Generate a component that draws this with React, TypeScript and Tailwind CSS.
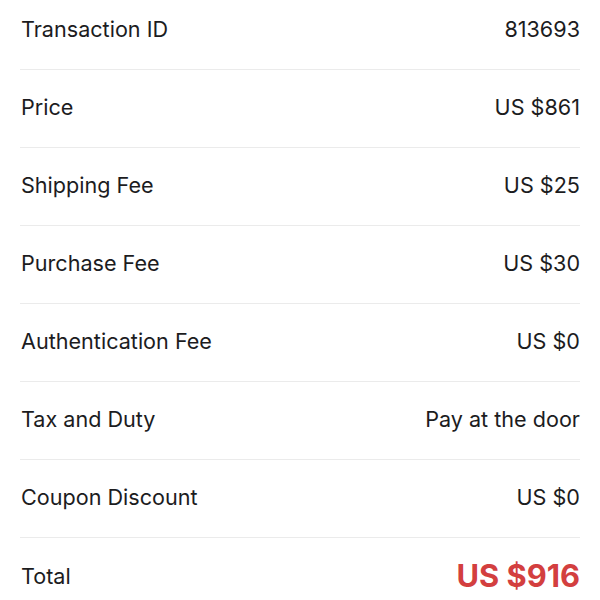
const rows = [
  { label: 'Transaction ID', value: '813693' },
  { label: 'Price', value: 'US $861' },
  { label: 'Shipping Fee', value: 'US $25' },
  { label: 'Purchase Fee', value: 'US $30' },
  { label: 'Authentication Fee', value: 'US $0' },
  { label: 'Tax and Duty', value: 'Pay at the door' },
  { label: 'Coupon Discount', value: 'US $0' },
]

const App = () => {
  return (
    <section className="h-[600px] w-[600px] overflow-hidden bg-white font-['Inter',sans-serif] text-[#1c1c1e]">
      <div className="-mt-[8px] px-5">
        {rows.map((row) => (
          <div
            key={row.label}
            className="flex h-[78px] items-center justify-between border-b border-[#ebebeb] pb-[3px] pl-px text-[21.6px]">
            <span>{row.label}</span>
            <span>{row.value}</span>
          </div>
        ))}
        <div className="flex h-[79px] items-center justify-between pb-[3px] pl-px text-[21.6px]">
          <span>Total</span>
          <span className="text-[30.8px] font-bold text-[#d33f3f]">US $916</span>
        </div>
      </div>
    </section>
  )
}

export default App
